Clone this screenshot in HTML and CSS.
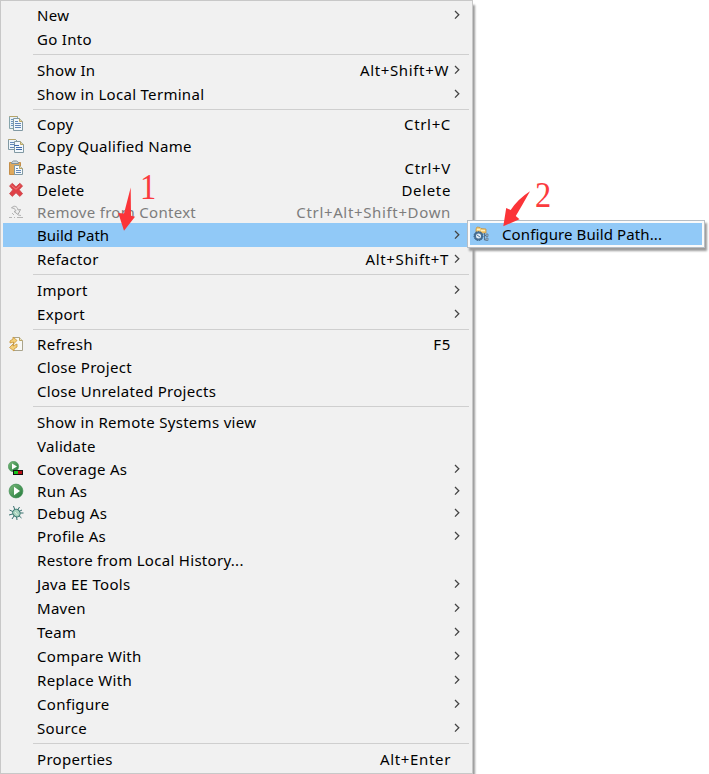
FILE: index.html
```html
<!DOCTYPE html>
<html lang="en">
<head>
<meta charset="utf-8">
<title>Context menu</title>
<link rel="stylesheet" href="styles.css">
</head>
<body>
<svg width="0" height="0" class="defs">
  <defs>
    <symbol id="chev" viewBox="0 0 6 10"><path d="M1 1l3.800 3.800L1 8.600" fill="none" stroke="#444" stroke-width="1.300"/></symbol>
    <linearGradient id="green" x1="0" y1="0" x2="1" y2="1"><stop offset="0" stop-color="#7dbb7c"/><stop offset="1" stop-color="#21793a"/></linearGradient>
  </defs>
</svg>
<nav class="menu">
  <div class="row"><span class="icon"></span><span class="label">New</span><svg class="chev"><use href="#chev"/></svg></div>
  <div class="row"><span class="icon"></span><span class="label">Go Into</span></div>
  <hr>
  <div class="row"><span class="icon"></span><span class="label">Show In</span><span class="key">Alt+Shift+W</span><svg class="chev"><use href="#chev"/></svg></div>
  <div class="row"><span class="icon"></span><span class="label">Show in Local Terminal</span><svg class="chev"><use href="#chev"/></svg></div>
  <hr>
  <div class="row short"><svg class="icon" viewBox="0 0 16 16"><path d="M1.500 .500h8v12h-8z" fill="#e9f1f6" stroke="#86a5ac"/><path d="M1.500 .500h8" stroke="#b8a468"/><path d="M3 3.500h2M3 5.500h2M3 7.500h2M3 9.500h2" stroke="#6b94bf"/><path d="M5.500 2.500h6l3 3v9h-9z" fill="#f3f8fc" stroke="#8199a3"/><path d="M11.500 2.500v3h3" fill="#e8d79b" stroke="#b8a468"/><path d="M7 5.500h3M7 7.500h6M7 9.500h6M7 11.500h6" stroke="#6287b8"/></svg><span class="label">Copy</span><span class="key">Ctrl+C</span></div>
  <div class="row short"><svg class="icon" viewBox="0 0 16 16"><path d="M.500 1.500h7l2 2v8h-9z" fill="#edf5fb" stroke="#8199a3"/><path d="M.500 1.500h7" stroke="#b8a468"/><path d="M2 4.500h4M2 6.500h4M2 9.500h4" stroke="#6287b8"/><path d="M6.500 3.500h6l3 3v8h-9z" fill="#f3f8fc" stroke="#8199a3"/><path d="M12.500 3.500v3h3" fill="#e8d79b" stroke="#b8a468"/><path d="M6 7.500h5M8 9.500h6M8 11.500h6" stroke="#426dac"/></svg><span class="label">Copy Qualified Name</span></div>
  <div class="row short"><svg class="icon" viewBox="0 0 16 16"><path d="M1.500 2.500h11v12h-11z" fill="#dfa95d" stroke="#c48e49"/><path d="M3.500 3.500v-1l2-1.500h3l2 1.500v1z" fill="#d7dde0" stroke="#829299"/><path d="M6.500 5.500h5l3 3v6h-8z" fill="#f5f9fb" stroke="#8199a3"/><path d="M11.500 5.500v3h3" fill="#eadcac" stroke="#b8a468"/><path d="M8 8.500h2M8 10.500h5M8 12.500h5" stroke="#6287b8"/></svg><span class="label">Paste</span><span class="key">Ctrl+V</span></div>
  <div class="row short"><svg class="icon" viewBox="0 0 16 16"><path d="M4.300 1.300L8 4.800l3.800-3.500 2.800 2.600-3.400 3.800 3.400 4-2.800 2.700L8 10.800l-3.700 3.600-2.800-2.700 3.300-4-3.300-3.800z" fill="#df4047" stroke="#c9474b" stroke-width=".8" stroke-linejoin="round"/><path d="M3.500 3.400L8 7.300l4.300-4" fill="none" stroke="#f18484"/></svg><span class="label">Delete</span><span class="key">Delete</span></div>
  <div class="row short disabled"><svg class="icon" viewBox="0 0 16 16"><path d="M3.500 4c2-3 6-2 6.500 2l2.500-.500-2.500 5-4-3 2-.700c-1-2-2.500-3-4.500-2.800z" fill="#eee" stroke="#aaa"/><path d="M1 13.500h3M6 13.500h1M9 13.500h6M4 9l2 2M10 11l3 .500" stroke="#b5b5b5"/></svg><span class="label">Remove from Context</span><span class="key">Ctrl+Alt+Shift+Down</span></div>
  <div class="row active"><span class="icon"></span><span class="label">Build Path</span><svg class="chev"><use href="#chev"/></svg></div>
  <div class="row"><span class="icon"></span><span class="label">Refactor</span><span class="key">Alt+Shift+T</span><svg class="chev"><use href="#chev"/></svg></div>
  <hr>
  <div class="row"><span class="icon"></span><span class="label">Import</span><svg class="chev"><use href="#chev"/></svg></div>
  <div class="row"><span class="icon"></span><span class="label">Export</span><svg class="chev"><use href="#chev"/></svg></div>
  <hr>
  <div class="row short"><svg class="icon" viewBox="0 0 16 16"><path d="M5.500 1.500h6l3 3v10h-9z" fill="#f8f8f5" stroke="#aaa48c"/><path d="M11.500 1.500v3h3" fill="#eee3bd" stroke="#b8a468"/><path d="M2 7V5l3-2V1l4 3.500L5.500 8V6zM9 8v3l-3 2v2l-4.500-3.500L5 8v2z" fill="#f3cf79" stroke="#c89438" stroke-width=".8"/></svg><span class="label">Refresh</span><span class="key">F5</span></div>
  <div class="row"><span class="icon"></span><span class="label">Close Project</span></div>
  <div class="row"><span class="icon"></span><span class="label">Close Unrelated Projects</span></div>
  <hr>
  <div class="row"><span class="icon"></span><span class="label">Show in Remote Systems view</span></div>
  <div class="row"><span class="icon"></span><span class="label">Validate</span></div>
  <div class="row short"><svg class="icon" viewBox="0 0 16 16"><circle cx="5.500" cy="5.500" r="5.200" fill="url(#green)" stroke="#4f9860" stroke-width=".6"/><path d="M4 2.500l5 3-5 3z" fill="#fff"/><path d="M5 9h10v5H5z" fill="#111"/><path d="M6 10h4v3H6z" fill="#19c51e"/><path d="M10 10h4v3h-4z" fill="#b90f17"/></svg><span class="label">Coverage As</span><svg class="chev"><use href="#chev"/></svg></div>
  <div class="row short"><svg class="icon" viewBox="0 0 16 16"><circle cx="8" cy="8" r="6.900" fill="url(#green)" stroke="#3c8b50" stroke-width=".7"/><path d="M6 3.800L12 8l-6 4.200z" fill="#fff"/></svg><span class="label">Run As</span><svg class="chev"><use href="#chev"/></svg></div>
  <div class="row short"><svg class="icon" viewBox="0 0 16 16"><path d="M8 8L5.500 1M8 8l3.500-6M8 8l6-3M8 8h7.500M8 8l5.500 5M8 8l1 7M8 8l-4 6M8 8l-7 2M8 8L1.500 5" stroke="#366f6d" stroke-width="1"/><ellipse cx="8.300" cy="8.300" rx="3.500" ry="4" transform="rotate(-35 8 8)" fill="#a9d3bf" stroke="#36766d"/><path d="M7 7l2.500 3" stroke="#e2f2df"/></svg><span class="label">Debug As</span><svg class="chev"><use href="#chev"/></svg></div>
  <div class="row"><span class="icon"></span><span class="label">Profile As</span><svg class="chev"><use href="#chev"/></svg></div>
  <div class="row"><span class="icon"></span><span class="label">Restore from Local History...</span></div>
  <div class="row"><span class="icon"></span><span class="label">Java EE Tools</span><svg class="chev"><use href="#chev"/></svg></div>
  <div class="row"><span class="icon"></span><span class="label">Maven</span><svg class="chev"><use href="#chev"/></svg></div>
  <div class="row"><span class="icon"></span><span class="label">Team</span><svg class="chev"><use href="#chev"/></svg></div>
  <div class="row"><span class="icon"></span><span class="label">Compare With</span><svg class="chev"><use href="#chev"/></svg></div>
  <div class="row"><span class="icon"></span><span class="label">Replace With</span><svg class="chev"><use href="#chev"/></svg></div>
  <div class="row"><span class="icon"></span><span class="label">Configure</span><svg class="chev"><use href="#chev"/></svg></div>
  <div class="row"><span class="icon"></span><span class="label">Source</span><svg class="chev"><use href="#chev"/></svg></div>
  <hr>
  <div class="row"><span class="icon"></span><span class="label">Properties</span><span class="key">Alt+Enter</span></div>
</nav>
<div class="submenu">
  <div class="subitem"><svg class="icon" viewBox="0 0 16 16"><path d="M3 3l1-2 3 .500 1 1 5 .500v4H3z" fill="#f5ce78" stroke="#c18b38" stroke-width=".7"/><path d="M4 3.500h3M8 4.500h4" stroke="#fff0bd"/><circle cx="5.500" cy="10" r="4.500" fill="#477095" stroke="#355b7c" stroke-dasharray="1.500 1"/><circle cx="5.500" cy="10" r="2.500" fill="#e4eef6"/><path d="M4 9l3 2" stroke="#50789b"/><path d="M11.500 7v7h2M11.500 9.500h2" fill="none" stroke="#58728b"/><path d="M13 8h2v2.500h-2zM13 12h2v2.500h-2z" fill="#a9bfd0" stroke="#58728b" stroke-width=".7"/></svg><span class="label">Configure Build Path...</span></div>
</div>
<svg class="arrow first" viewBox="0 0 18 44"><path d="M12.700 .500L6 26.500.300 26 6 43.700 17 29.700l-4-1z" fill="#fb3438"/></svg>
<span class="mark one">1</span>
<svg class="arrow second" viewBox="0 0 28 36"><path d="M27 .300Q15 8 7.700 19L3.200 17 .300 35.200 16.500 28.300 12.800 25Q20 13 27 .300z" fill="#fb3438"/></svg>
<span class="mark two">2</span>
</body>
</html>
```
FILE: styles.css
```css
* { box-sizing: border-box; }
body {
  margin: 0;
  width: 709px;
  height: 774px;
  overflow: hidden;
  position: relative;
  background: #fff;
  color: #000;
  font: 15px/22px "Noto Sans", sans-serif;
}
.defs { position: absolute; }
.menu {
  width: 473px;
  height: 774px;
  padding: 2px 0;
  border: 1px solid #c8c8c8;
  background: #f1f1f1;
  box-shadow: 2px 5px 2px #9b9b9b;
}
.row {
  display: flex;
  align-items: center;
  height: 24px;
  margin: 0 2px;
  padding: 0 10px 0 5px;
}
.row.short { height: 22px; }
.row.active { background: #91c9f7; margin-right: 0; padding-right: 12px; }
.disabled { color: #7d7d7d; }
.icon { width: 16px; height: 16px; flex: none; margin-right: 13px; }
.label { flex: 1; white-space: nowrap; letter-spacing: .3px; }
.active .label { letter-spacing: 0; }
.subitem .label { letter-spacing: .1px; }
.key { margin-right: 9px; white-space: nowrap; letter-spacing: .65px; }
.chev { width: 6px; height: 10px; flex: none; }
.key + .chev { margin-left: -4px; }
.key:has(+ .chev) { margin-right: 8px; }
.key + .chev { margin-left: -3px; }
hr {
  height: 1px;
  margin: 3px 3px 3px 32px;
  border: 0;
  background: #cfcfcf;
}
.submenu {
  position: absolute;
  left: 467px;
  top: 220px;
  width: 238px;
  height: 28px;
  padding: 2px;
  border: 1px solid #b7bec5;
  background: #fafafa;
  box-shadow: 2px 3px 2px #9b9b9b;
}
.subitem { display: flex; align-items: center; height: 22px; padding-left: 3px; background: #91c9f7; }
.arrow { position: absolute; }
.first { left: 118px; top: 187px; width: 18px; height: 44px; }
.second { left: 503px; top: 191px; width: 28px; height: 36px; }
.mark { position: absolute; color: #fb3b3e; font: 36px/26px "Liberation Serif", serif; transform: scaleX(.9); }
.one { left: 139px; top: 174px; }
.two { left: 534px; top: 182px; }
```
